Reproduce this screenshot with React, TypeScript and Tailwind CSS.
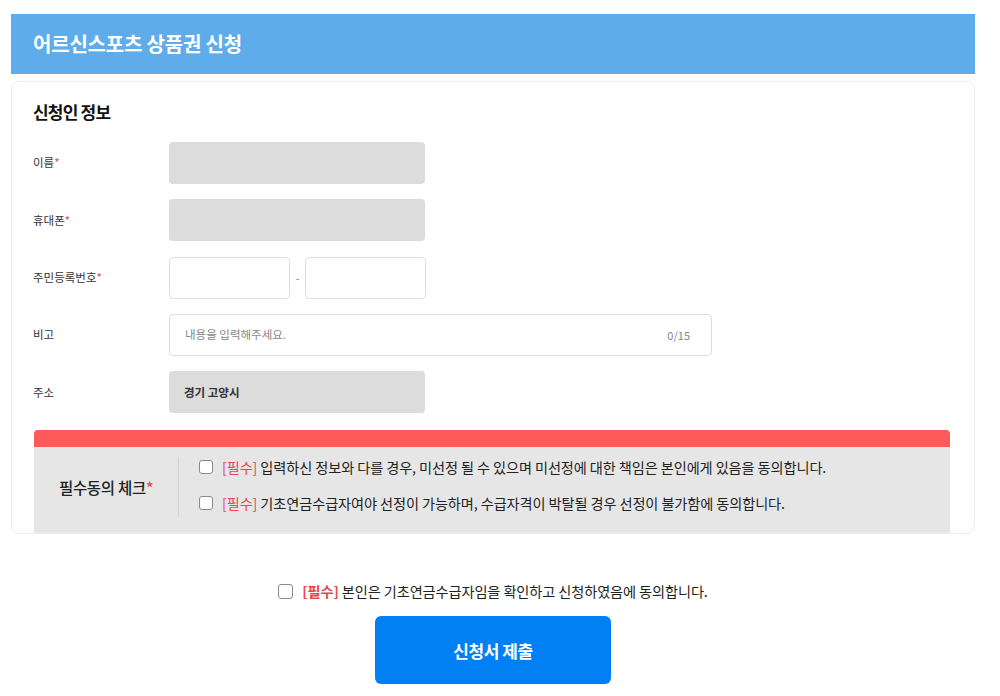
import React from "react";

const font = { fontFamily: '"Noto Sans CJK KR", "Noto Sans", sans-serif' };

function Box({ w = "w-[14px] h-[14px]" }: { w?: string }) {
  return <span className={`inline-block ${w} shrink-0 rounded-[3px] border border-[#8a8a8a] bg-white`} />;
}

function Row({ label, req, children }: { label: string; req?: boolean; children: React.ReactNode }) {
  return (
    <div className="flex items-center h-[42px]">
      <div className="w-[136px] text-[11.5px] text-[#333]">
        {label}
        {req && <span className="text-[#e5484d]">*</span>}
      </div>
      {children}
    </div>
  );
}

export default function App() {
  return (
    <div style={font} className="w-[1000px] h-[696px] bg-white overflow-hidden">
      <div className="ml-[11px] w-[964px] pt-[14px]">
        <div className="h-[60px] bg-[#5eacea] flex items-center pl-[22px]">
          <span className="text-white text-[20px] font-bold tracking-[-0.2px]">어르신스포츠 상품권 신청</span>
        </div>
        <div className="mt-[7px] h-[453px] border border-[#ececec] rounded-[8px] bg-white pl-[21px] pr-[24px] pt-[16px] flex flex-col">
          <div className="text-[17px] font-bold text-[#111] tracking-[-0.8px] h-[28px] leading-[28px]">신청인 정보</div>
          <div className="mt-[16px] flex flex-col gap-[15.3px]">
            <Row label="이름" req>
              <div className="w-[256px] h-[42px] rounded-[4px] bg-[#dcdcdc]" />
            </Row>
            <Row label="휴대폰" req>
              <div className="w-[256px] h-[42px] rounded-[4px] bg-[#dcdcdc]" />
            </Row>
            <Row label="주민등록번호" req>
              <div className="flex items-center">
                <div className="w-[121px] h-[42px] rounded-[4px] border border-[#dedede] bg-white" />
                <span className="w-[15px] text-center text-[12px] text-[#999]">-</span>
                <div className="w-[121px] h-[42px] rounded-[4px] border border-[#dedede] bg-white" />
              </div>
            </Row>
            <Row label="비고">
              <div className="w-[543px] h-[42px] rounded-[4px] border border-[#dedede] bg-white flex items-center justify-between pl-[15px] pr-[21px]">
                <span className="text-[11.5px] text-[#888]">내용을 입력해주세요.</span>
                <span className="text-[11px] text-[#888]">0/15</span>
              </div>
            </Row>
            <Row label="주소">
              <div className="w-[256px] h-[42px] rounded-[4px] bg-[#dcdcdc] flex items-center pl-[15px]">
                <span className="text-[11.5px] text-[#333] font-semibold">경기 고양시</span>
              </div>
            </Row>
          </div>
          <div className="mt-[17px] ml-[1px] flex-1 rounded-t-[4px] overflow-hidden flex flex-col">
            <div className="h-[17px] bg-[#ff5a5a]" />
            <div className="flex-1 bg-[#e6e6e6] flex items-start pt-[10px]">
              <div className="w-[144px] h-[60px] flex items-center justify-center">
                <span className="text-[15.5px] text-[#222] font-medium tracking-[-0.3px]">
                  필수동의 체크<span className="text-[#e5484d]">*</span>
                </span>
              </div>
              <div className="w-px h-[60px] bg-[#d4d4d4]" />
              <div className="pl-[20px] flex flex-col gap-[16px]">
                <div className="flex items-center gap-[9px] h-[20px] text-[14.2px] text-[#222] tracking-[-0.1px]">
                  <Box />
                  <span>
                    <span className="text-[#e5484d]">[필수]</span> 입력하신 정보와 다를 경우, 미선정 될 수 있으며 미선정에 대한 책임은 본인에게 있음을 동의합니다.
                  </span>
                </div>
                <div className="flex items-center gap-[9px] h-[20px] text-[14.2px] text-[#222] tracking-[-0.1px]">
                  <Box />
                  <span>
                    <span className="text-[#e5484d]">[필수]</span> 기초연금수급자여야 선정이 가능하며, 수급자격이 박탈될 경우 선정이 불가함에 동의합니다.
                  </span>
                </div>
              </div>
            </div>
          </div>
        </div>
        <div className="mt-[47px] flex flex-col items-center">
          <div className="flex items-center gap-[9px] text-[14.2px] text-[#222] tracking-[-0.1px]">
            <Box w="w-[15px] h-[15px]" />
            <span>
              <span className="text-[#e5484d] font-bold">[필수]</span> 본인은 기초연금수급자임을 확인하고 신청하였음에 동의합니다.
            </span>
          </div>
          <button className="mt-[14px] w-[236px] h-[68px] rounded-[6px] bg-[#0080f2] text-white text-[17px] font-bold tracking-[-0.4px]">
            신청서 제출
          </button>
        </div>
      </div>
    </div>
  );
}
